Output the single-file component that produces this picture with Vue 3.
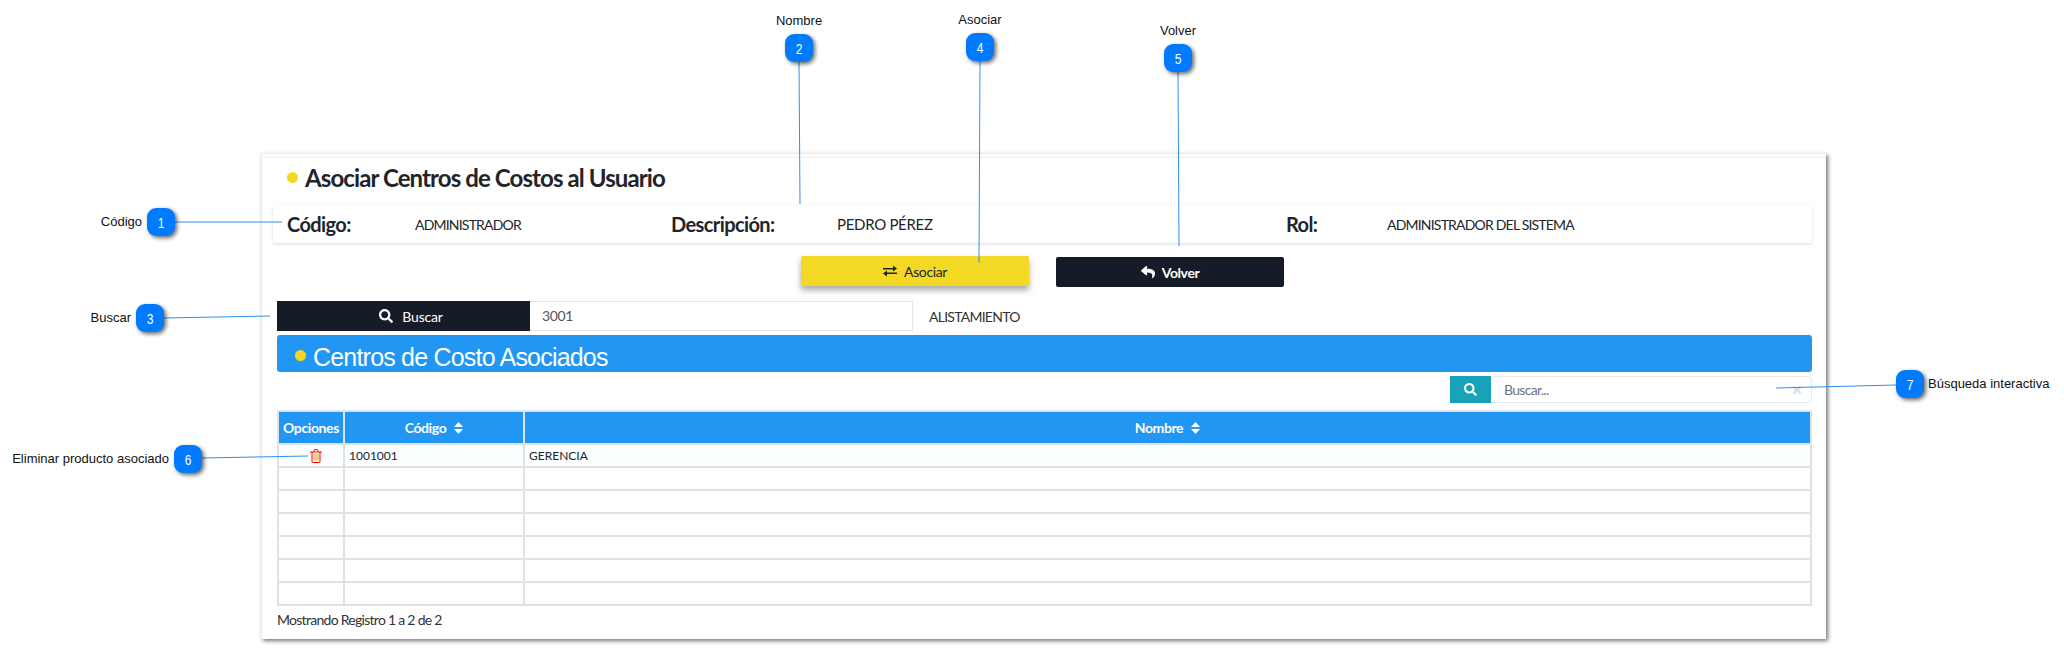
<script setup>
const callouts = [
  { n: 1, x: 147, y: 208, label: 'Código', side: 'left', line: [175, 222, 282, 222] },
  { n: 2, x: 785, y: 34, label: 'Nombre', side: 'top', line: [799, 62, 800, 204] },
  { n: 3, x: 136, y: 304, label: 'Buscar', side: 'left', line: [164, 318, 270, 316] },
  { n: 4, x: 966, y: 33, label: 'Asociar', side: 'top', line: [980, 61, 979, 263] },
  { n: 5, x: 1164, y: 44, label: 'Volver', side: 'top', line: [1178, 72, 1179, 246] },
  { n: 6, x: 174, y: 445, label: 'Eliminar producto asociado', side: 'left', line: [202, 458, 308, 456] },
  { n: 7, x: 1896, y: 370, label: 'Búsqueda interactiva', side: 'right', line: [1896, 385, 1776, 388] }
]

const emptyRows = [1, 2, 3, 4, 5, 6]

const searchPath = 'M505 442.7L405.3 343c-4.5-4.5-10.6-7-17-7H372c27.6-35.3 44-79.7 44-128C416 93.1 322.9 0 208 0S0 93.1 0 208s93.1 208 208 208c48.3 0 92.7-16.4 128-44v16.3c0 6.4 2.5 12.5 7 17l99.7 99.7c9.4 9.4 24.6 9.4 33.9 0l28.3-28.3c9.4-9.4 9.4-24.6.1-34zM208 336c-70.7 0-128-57.2-128-128 0-70.7 57.2-128 128-128 70.7 0 128 57.2 128 128 0 70.7-57.2 128-128 128z'
const replyPath = 'M8.309 189.836L184.313 37.851C199.719 24.546 224 35.347 224 56.015v80.053c160.629 1.839 288 34.032 288 186.258 0 61.441-39.581 122.309-83.333 154.132-13.653 9.931-33.111-2.533-28.077-18.631 45.344-145.012-21.507-183.51-176.59-185.742V360c0 20.7-24.3 31.453-39.687 18.164l-176.004-152c-11.071-9.562-11.086-26.753 0-36.328z'
</script>

<template>
  <div class="page">
    <div class="card">
      <div class="card-line"></div>
      <h1 class="title"><span class="dot"></span>Asociar Centros de Costos al Usuario</h1>

      <div class="info">
        <div class="info-col col-a"><b class="k1">Código:</b><span>ADMINISTRADOR</span></div>
        <div class="info-col col-b"><b class="k2">Descripción:</b><span class="v2">PEDRO PÉREZ</span></div>
        <div class="info-col"><b class="k3">Rol:</b><span>ADMINISTRADOR DEL SISTEMA</span></div>
      </div>

      <div class="actions">
        <button class="btn btn-yellow">
          <svg viewBox="0 0 14 12" width="14" height="12">
            <path d="M0 3h10V0.6L14 3.6 10 6.4V4.4H0z M14 7.6H4V5.6L0 8.6 4 11.4V9H14z" fill="#212529" />
          </svg>
          Asociar
        </button>
        <button class="btn btn-dark">
          <svg viewBox="0 0 512 512" width="14" height="14"><path :d="replyPath" fill="#fff" /></svg>
          Volver
        </button>
      </div>

      <div class="search-row">
        <button class="buscar">
          <svg viewBox="0 0 512 512" width="14" height="14"><path :d="searchPath" fill="#fff" /></svg>
          Buscar
        </button>
        <div class="code-input">3001</div>
        <span class="found">ALISTAMIENTO</span>
      </div>

      <div class="band"><span class="dot band-dot"></span><span class="band-text">Centros de Costo Asociados</span></div>

      <div class="filter">
        <div class="filter-btn">
          <svg viewBox="0 0 512 512" width="13" height="13"><path :d="searchPath" fill="#fff" /></svg>
        </div>
        <div class="filter-input">
          <span>Buscar...</span>
          <svg viewBox="0 0 10 10" width="10" height="10">
            <path d="M1.5 1.5l7 7M8.5 1.5l-7 7" stroke="#dfe3e6" stroke-width="2.8" fill="none" />
          </svg>
        </div>
      </div>

      <table class="grid">
        <thead>
          <tr>
            <th class="c1">Opciones</th>
            <th class="c2">Código <svg class="sort" viewBox="0 0 9 12" width="9" height="12"><path d="M4.5 0L9 5H0zM4.5 12L0 7h9z" fill="#fff" /></svg></th>
            <th>Nombre <svg class="sort" viewBox="0 0 9 12" width="9" height="12"><path d="M4.5 0L9 5H0zM4.5 12L0 7h9z" fill="#fff" /></svg></th>
          </tr>
        </thead>
        <tbody>
          <tr class="filled">
            <td class="trash-cell">
              <svg viewBox="0 0 12 14" width="12" height="14" fill="none" stroke="#f00" stroke-width="1">
                <path d="M0 3h12M2 3v9.5a1 1 0 0 0 1 1h6a1 1 0 0 0 1-1V3M4 3V1.2a.7.7 0 0 1 .7-.7h2.6a.7.7 0 0 1 .7.7V3" />
                <path d="M4 5v6.5M6 5v6.5M8 5v6.5" stroke="#e8951e" />
              </svg>
            </td>
            <td>1001001</td>
            <td>GERENCIA</td>
          </tr>
          <tr v-for="r in emptyRows" :key="r"><td></td><td></td><td></td></tr>
        </tbody>
      </table>

      <div class="foot">Mostrando Registro 1 a 2 de 2</div>
    </div>

    <svg class="lines" width="2064" height="648">
      <line
        v-for="c in callouts"
        :key="c.n"
        :x1="c.line[0]"
        :y1="c.line[1]"
        :x2="c.line[2]"
        :y2="c.line[3]"
        stroke="#2f8fee"
        stroke-width="1"
      />
    </svg>

    <div
      v-for="c in callouts"
      :key="'b' + c.n"
      class="callout"
      :style="{ left: c.x + 'px', top: c.y + 'px' }"
    >
      <span class="badge"><span class="num">{{ c.n }}</span></span>
      <span class="tag" :class="'tag-' + c.side">{{ c.label }}</span>
    </div>
  </div>
</template>

<style scoped>
.page {
  position: relative;
  width: 2064px;
  height: 648px;
  overflow: hidden;
  background: #fff;
  padding-top: 153px;
  box-sizing: border-box;
  font-family: Lato, "Liberation Sans", sans-serif;
  color: #212529;
}
.card {
  margin-left: 261px;
  width: 1565px;
  height: 486px;
  box-sizing: border-box;
  padding: 0 14px 0 11px;
  background: #fff;
  border-top: 1px solid #ececec;
  border-left: 1px solid #ececec;
  box-shadow: 2px 2px 4px #777;
}
.card-line {
  margin: 3px -14px 0 -11px;
  border-top: 1px solid #eee;
}
.title {
  display: flex;
  align-items: center;
  height: 38px;
  margin: 0 0 9px 14px;
  font-size: 24px;
  font-weight: 700;
  letter-spacing: -0.9px;
  color: #212529;
}
.dot {
  display: inline-block;
  width: 11px;
  height: 11px;
  border-radius: 50%;
  background: #f3d924;
  margin-right: 7px;
}
.info {
  display: flex;
  align-items: center;
  height: 38px;
  padding-left: 14px;
  background: #fff;
  box-shadow: 0 1px 3px rgba(0, 0, 0, 0.14);
  font-size: 14px;
  letter-spacing: -0.8px;
}
.info b {
  font-size: 20px;
  font-weight: 700;
  letter-spacing: -0.6px;
}
.info-col {
  display: flex;
  align-items: center;
}
.col-a { width: 384px; }
.col-b { width: 615px; }
.k1 { width: 128px; }
.k2 { width: 166px; }
.k3 { width: 101px; }
.info .v2 {
  font-size: 15px;
  letter-spacing: -0.3px;
}
.actions {
  display: flex;
  justify-content: center;
  gap: 27px;
  height: 31px;
  margin-top: 13px;
}
.btn {
  width: 228px;
  height: 30px;
  border: none;
  border-radius: 2px;
  font-family: inherit;
  font-size: 14px;
  letter-spacing: -0.4px;
  display: flex;
  align-items: center;
  justify-content: center;
  gap: 7px;
}
.btn-yellow {
  background: #f3d924;
  color: #212529;
  box-shadow: 0 4px 6px rgba(0, 0, 0, 0.35);
}
.btn-dark {
  margin-top: 1px;
  background: #151c28;
  color: #fff;
  font-weight: 700;
}
.search-row {
  display: flex;
  align-items: center;
  height: 30px;
  margin: 14px 0 0 4px;
}
.buscar {
  width: 253px;
  height: 30px;
  padding-left: 21px;
  border: none;
  background: #151c28;
  color: #fff;
  font-family: inherit;
  font-size: 14px;
  letter-spacing: -0.2px;
  display: flex;
  align-items: center;
  justify-content: center;
  gap: 9px;
}
.code-input {
  width: 383px;
  height: 30px;
  box-sizing: border-box;
  padding-left: 12px;
  line-height: 28px;
  border: 1px solid #e5e5e5;
  border-left: none;
  font-size: 14px;
  letter-spacing: -0.4px;
  color: #555;
}
.found {
  margin-left: 16px;
  font-size: 14px;
  letter-spacing: -0.75px;
  color: #333;
}
.band {
  display: flex;
  align-items: center;
  height: 37px;
  margin: 4px 0 0 4px;
  padding-left: 18px;
  background: #2196f3;
  border-radius: 3px;
  font-family: "Liberation Sans", Arial, sans-serif;
  font-size: 25px;
  letter-spacing: -0.8px;
  color: #fff;
}
.band-dot {
  margin: 3px 7px 0 0;
}
.band-text {
  padding-top: 7px;
}
.filter {
  display: flex;
  justify-content: flex-end;
  height: 27px;
  margin-top: 4px;
}
.filter-btn {
  width: 41px;
  display: flex;
  align-items: center;
  justify-content: center;
  background: #17a2b8;
}
.filter-input {
  width: 321px;
  box-sizing: border-box;
  display: flex;
  align-items: center;
  justify-content: space-between;
  padding: 0 9px 0 13px;
  border: 1px solid #e9ecef;
  border-left: none;
  border-radius: 0 4px 4px 0;
  font-size: 14px;
  letter-spacing: -0.7px;
  color: #6c757d;
}
.grid {
  width: 1535px;
  margin: 7px 0 0 4px;
  border-collapse: collapse;
  table-layout: fixed;
  border: 2px solid #dee2e6;
  font-size: 12px;
}
.grid th,
.grid td {
  box-sizing: border-box;
  border: 2px solid #dee2e6;
  padding: 0 4px;
}
.grid th {
  height: 33px;
  padding: 0;
  background: #2196f3;
  color: #fff;
  font-size: 14px;
  font-weight: 700;
  letter-spacing: -0.4px;
  text-align: center;
}
.grid td {
  height: 23px;
  color: #212529;
}
.c1 { width: 66px; }
.c2 { width: 180px; }
.sort {
  margin-left: 5px;
  vertical-align: -1px;
}
.filled td {
  background: #fbffff;
}
.grid .trash-cell {
  padding-left: 14px;
  text-align: center;
  line-height: 0;
}
.foot {
  margin: 5px 0 0 4px;
  font-size: 14px;
  letter-spacing: -0.72px;
  color: #333;
}
.lines {
  position: absolute;
  left: 0;
  top: 0;
  pointer-events: none;
}
.callout {
  position: absolute;
  width: 28px;
  height: 28px;
  font-family: "Liberation Sans", Arial, sans-serif;
}
.badge {
  display: flex;
  align-items: center;
  justify-content: center;
  width: 28px;
  height: 28px;
  border-radius: 9px;
  background: #007bff;
  color: #fff;
  font-size: 15px;
  box-shadow: 2px 2px 4px rgba(0, 0, 0, 0.6);
}
.num {
  display: inline-block;
  transform: scaleX(0.8);
}
.tag {
  position: absolute;
  font-size: 13px;
  color: #111;
  white-space: nowrap;
}
.tag-left {
  right: 33px;
  top: 6px;
}
.tag-right {
  left: 32px;
  top: 6px;
}
.tag-top {
  left: 50%;
  transform: translateX(-50%);
  top: -21px;
}
</style>
